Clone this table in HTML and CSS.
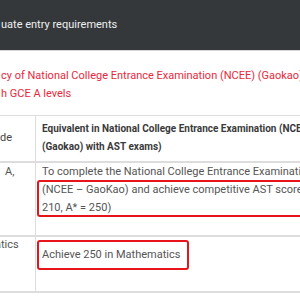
FILE: index.html
```html
<!DOCTYPE html>
<html>
<head>
<meta charset="utf-8">
<link rel="stylesheet" href="styles.css">
</head>
<body>
<div class="topbar"><span class="title">uate entry requirements</span></div>
<p class="lead">cy of National College Entrance Examination (NCEE) (Gaokao)<br>h GCE A levels</p>
<table class="req">
  <tr>
    <th class="c1">de</th>
    <th class="c2">Equivalent in National College Entrance Examination (NCEE)<br>(Gaokao) with AST exams)</th>
  </tr>
  <tr>
    <td class="c1"><span class="ind">A,</span></td>
    <td class="c2">To complete the National College Entrance Examination<br>(NCEE – GaoKao) and achieve competitive AST scores<br>210, A* = 250)<span class="mark m1"></span></td>
  </tr>
  <tr class="r3">
    <td class="c1"><span class="cut">atics</span></td>
    <td class="c2"><span class="box">Achieve 250 in Mathematics</span></td>
  </tr>
</table>
</body>
</html>
```
FILE: styles.css
```css
html, body {
  margin: 0;
  padding: 0;
  background: #fff;
  overflow: hidden;
  width: 300px;
  height: 300px;
}
body {
  font-family: Roboto, "Noto Sans", sans-serif;
  color: #555;
}
.topbar {
  height: 51px;
  background: #35383b;
  border-bottom: 1px solid #d6d6d6;
  display: flex;
  align-items: center;
  padding-left: 1px;
  padding-bottom: 1px;
  box-sizing: border-box;
}
.title {
  color: #eef0f0;
  font-size: 11px;
  white-space: nowrap;
}
.lead {
  margin: 16px 0 0 1px;
  color: #e8283e;
  font-size: 11px;
  line-height: 18px;
  white-space: nowrap;
}
.req {
  margin-top: 12px;
  border-collapse: collapse;
  table-layout: fixed;
  width: 330px;
  font-size: 11px;
  line-height: 18px;
  white-space: nowrap;
}
.req tr {
  border-top: 1px solid #ddd;
  border-bottom: 2px solid #ddd;
}
.req th {
  font-weight: 700;
  font-size: 10px;
  color: #3a3a3a;
  text-align: left;
  padding: 4px 6px 5px 6px;
  height: 36px;
}
.req th.c1 {
  vertical-align: middle;
}
.req td {
  vertical-align: top;
  text-align: left;
  padding: 0 6px 18px 6px;
  position: relative;
}
.req .c1 {
  width: 35px;
  padding-left: 0;
  padding-right: 0;
  border-right: 1px solid #ddd;
  font-weight: 400;
  color: #555;
  overflow: hidden;
}
.req th.c1 { font-size: 11px; color: #444; }
.ind { margin-left: 5px; }
.cut { margin-left: -5px; }
.mark {
  position: absolute;
  left: 1px;
  top: 17px;
  width: 300px;
  height: 33px;
  border: 2px solid #e8141c;
  border-radius: 3px;
}
.r3 td.c2 {
  padding: 3px 6px 21px 1px;
}
.r3 td.c1 {
  line-height: 16px;
}
.box {
  display: inline-block;
  border: 2px solid #e8141c;
  border-radius: 3px;
  padding: 4px 7px 4px 3px;
}
```
